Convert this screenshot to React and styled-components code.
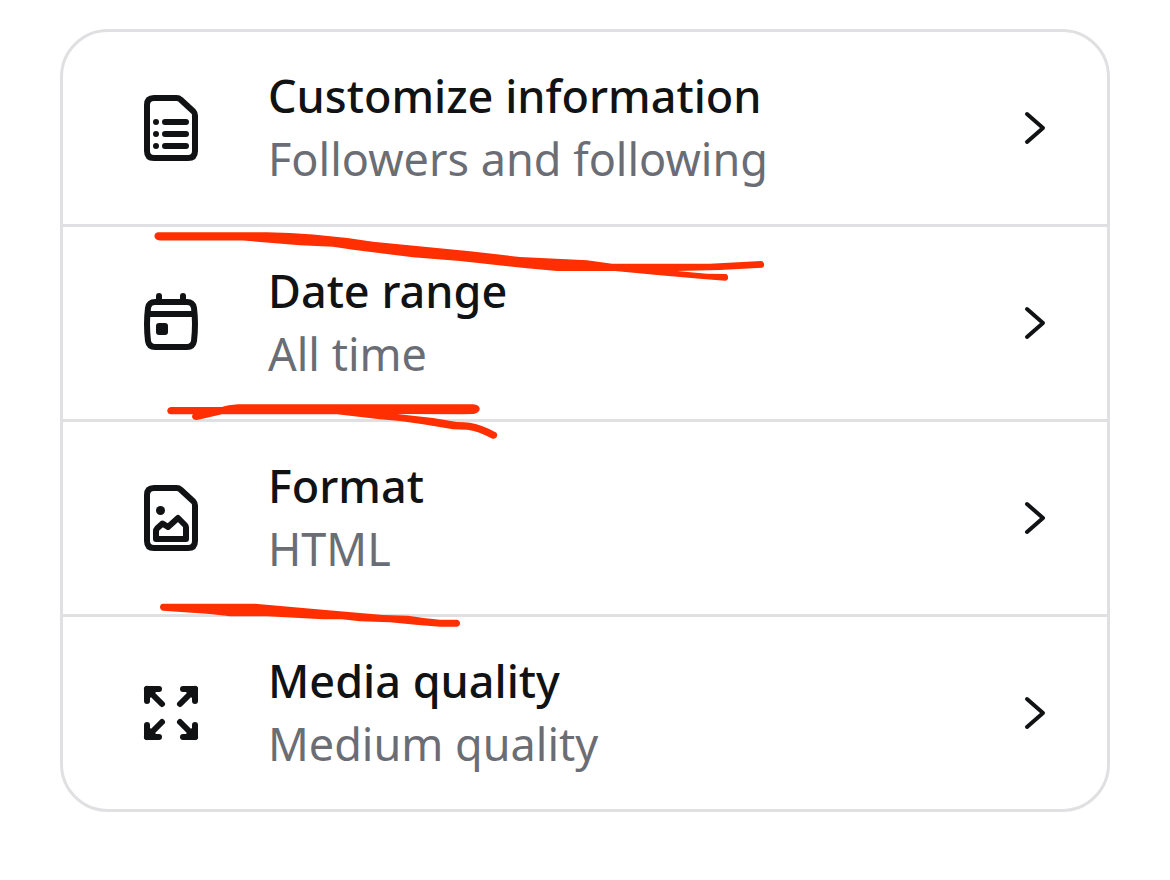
// Import dependencies
import React from 'react';
import styled, { createGlobalStyle } from 'styled-components';

const GlobalStyle = createGlobalStyle`
    * {
        box-sizing: border-box;
    }
    body {
        margin: 0;
        background: #ffffff;
        font-family: "Noto Sans", sans-serif;
    }
`

const Page = styled.main`
    padding: 29px 60px 68px;
`

const Card = styled.div`
    position: relative;
    border: 3px solid #e0e0e3;
    border-radius: 48px;
`

const List = styled.ul`
    list-style: none;
    margin: 0;
    padding: 0;
`

const Item = styled.li`
    & + & {
        border-top: 3px solid #e0e0e3;
    }
`

const RowButton = styled.button`
    display: flex;
    align-items: center;
    width: 100%;
    padding: 32px 60px 34px 78px;
    border: 0;
    background: transparent;
    color: #101214;
    font-family: inherit;
    text-align: left;
    cursor: pointer;
`

const Icon = styled.svg`
    flex: none;
    width: 60px;
    height: 72px;
    margin: 2px 67px 0 0;
    fill: none;
    stroke: currentColor;
    stroke-width: 6;
    stroke-linecap: round;
    stroke-linejoin: round;
`

const Chevron = styled.svg`
    flex: none;
    width: 24px;
    height: 40px;
    margin-top: 2px;
    fill: none;
    stroke: currentColor;
    stroke-width: 4;
    stroke-linecap: round;
    stroke-linejoin: round;
`

const Labels = styled.span`
    flex: 1;
    display: flex;
    flex-direction: column;
    min-width: 0;
    font-size: 45px;
    line-height: 63px;
`

const Title = styled.span`
    font-weight: 500;
`

const Value = styled.span`
    color: #6b6d75;
`

const Marks = styled.svg`
    position: absolute;
    top: 0;
    left: 0;
    width: 1044px;
    height: 777px;
    fill: #ff2f02;
    pointer-events: none;
`

// - - - - - - - - - - - - - - - - - - - - - - - - -
const page = "M13 6H35.500Q38 6 39.500 7.500L52.500 19.500Q54 21 54 23.500V59Q54 66 47 66H13Q6 66 6 59V13Q6 6 13 6Z"

const ListIcon = () => (
    <Icon viewBox="0 0 60 72" aria-hidden="true">
        <path d={page} />
        <path d="M15 30h0M15 42h0M15 54h0M24 30H45M24 42H45M24 54H45" />
    </Icon>
)

const CalendarIcon = () => (
    <Icon viewBox="0 0 60 72" aria-hidden="true">
        <path d="M14 15H46Q52 15 53 21Q55 37 53 54Q52 60 46 60H14Q8 60 7 54Q5 37 7 21Q8 15 14 15Z" />
        <path d="M18 9V15M42 9V15" />
        <path d="M7 27H53" strokeLinecap="butt" />
        <rect x="18" y="39" width="6" height="6" fill="currentColor" />
    </Icon>
)

const ImageIcon = () => (
    <Icon viewBox="0 0 60 72" aria-hidden="true">
        <path d={page} />
        <circle cx="19.500" cy="28.500" r="4.500" fill="currentColor" stroke="none" />
        <path d="M15 49Q15 47.500 16 46.500L21.500 41.500L27 45L37 36L44 43Q45 44 45 45.500V57H15Z" />
    </Icon>
)

const ExpandIcon = () => (
    <Icon viewBox="0 0 60 72" aria-hidden="true">
        <path d="M18 12H6V24M6 12L21 27" />
        <path d="M42 12H54V24M54 12L39 27" />
        <path d="M18 60H6V48M6 60L21 45" />
        <path d="M42 60H54V48M54 60L39 45" />
        <path d="M6 12H14L6 20ZM54 12H46L54 20ZM6 60H14L6 52ZM54 60H46L54 52Z" fill="currentColor" />
    </Icon>
)

const rows = [
    { title: "Customize information", value: "Followers and following", Glyph: ListIcon },
    { title: "Date range", value: "All time", Glyph: CalendarIcon },
    { title: "Format", value: "HTML", Glyph: ImageIcon },
    { title: "Media quality", value: "Medium quality", Glyph: ExpandIcon },
]

const SettingsRow = ({ title, value, Glyph }) => (
    <Item>
        <RowButton type="button">
            <Glyph />
            <Labels>
                <Title>{title}</Title>
                <Value>{value}</Value>
            </Labels>
            <Chevron viewBox="0 0 24 40" aria-hidden="true">
                <path d="M4 6L20 20L4 34" />
            </Chevron>
        </RowButton>
    </Item>
)

// Red marker underlines
const PenMarks = () => (
    <Marks viewBox="63 32 1044 777" aria-hidden="true">
        <path d="M158 232.300H267Q290 232.500 313 234.500Q343 237 373 241.700L470 251.300L520 257L587 260.300L612 263.700H710L761 261C765 261 765 267.700 762 267.700L720 270L677 271L707 273.700L726 274C729 275 729 280.700 725 280.700L703 279L660 275.300L615 271H557L527 268.300L460 261L413 257.300L353 249.700L333 246.700L300 245.300L243 240.500H160C153 240 153 233 158 232.300Z" />
        <path d="M171 407H222Q228 405 238 404.300H473C482 404.500 482 413 473 414L463 414.300L397 414L433 418L457 422Q465 422 470 422.700Q483 425 496 432.500C499 435 496 440 492 438.500Q478 431 467 429.700L453 429.300L423 424.300L400 421L380 419.300L337 414.300H222L197 420C192 420 191 416 193 414.300H171C166 414 166 407.500 171 407Z" />
        <path d="M163 603.700H255L317 609.300L383 615L408 615.700Q425 618.500 440 619.700H457C461 620 461 626.500 457 626.700H440Q415 625 390 622.300L360 621.300L342 619.300H323L267 616.300H230L210 614L163 610.700C159 610 159 604 163 603.700Z" />
    </Marks>
)

const App = () => {
    return (
        <Page>
            <GlobalStyle />
            <Card>
                <List>
                    {rows.map(row => (
                        <SettingsRow key={row.title} {...row} />
                    ))}
                </List>
                <PenMarks />
            </Card>
        </Page>
    )
}

export default App;
